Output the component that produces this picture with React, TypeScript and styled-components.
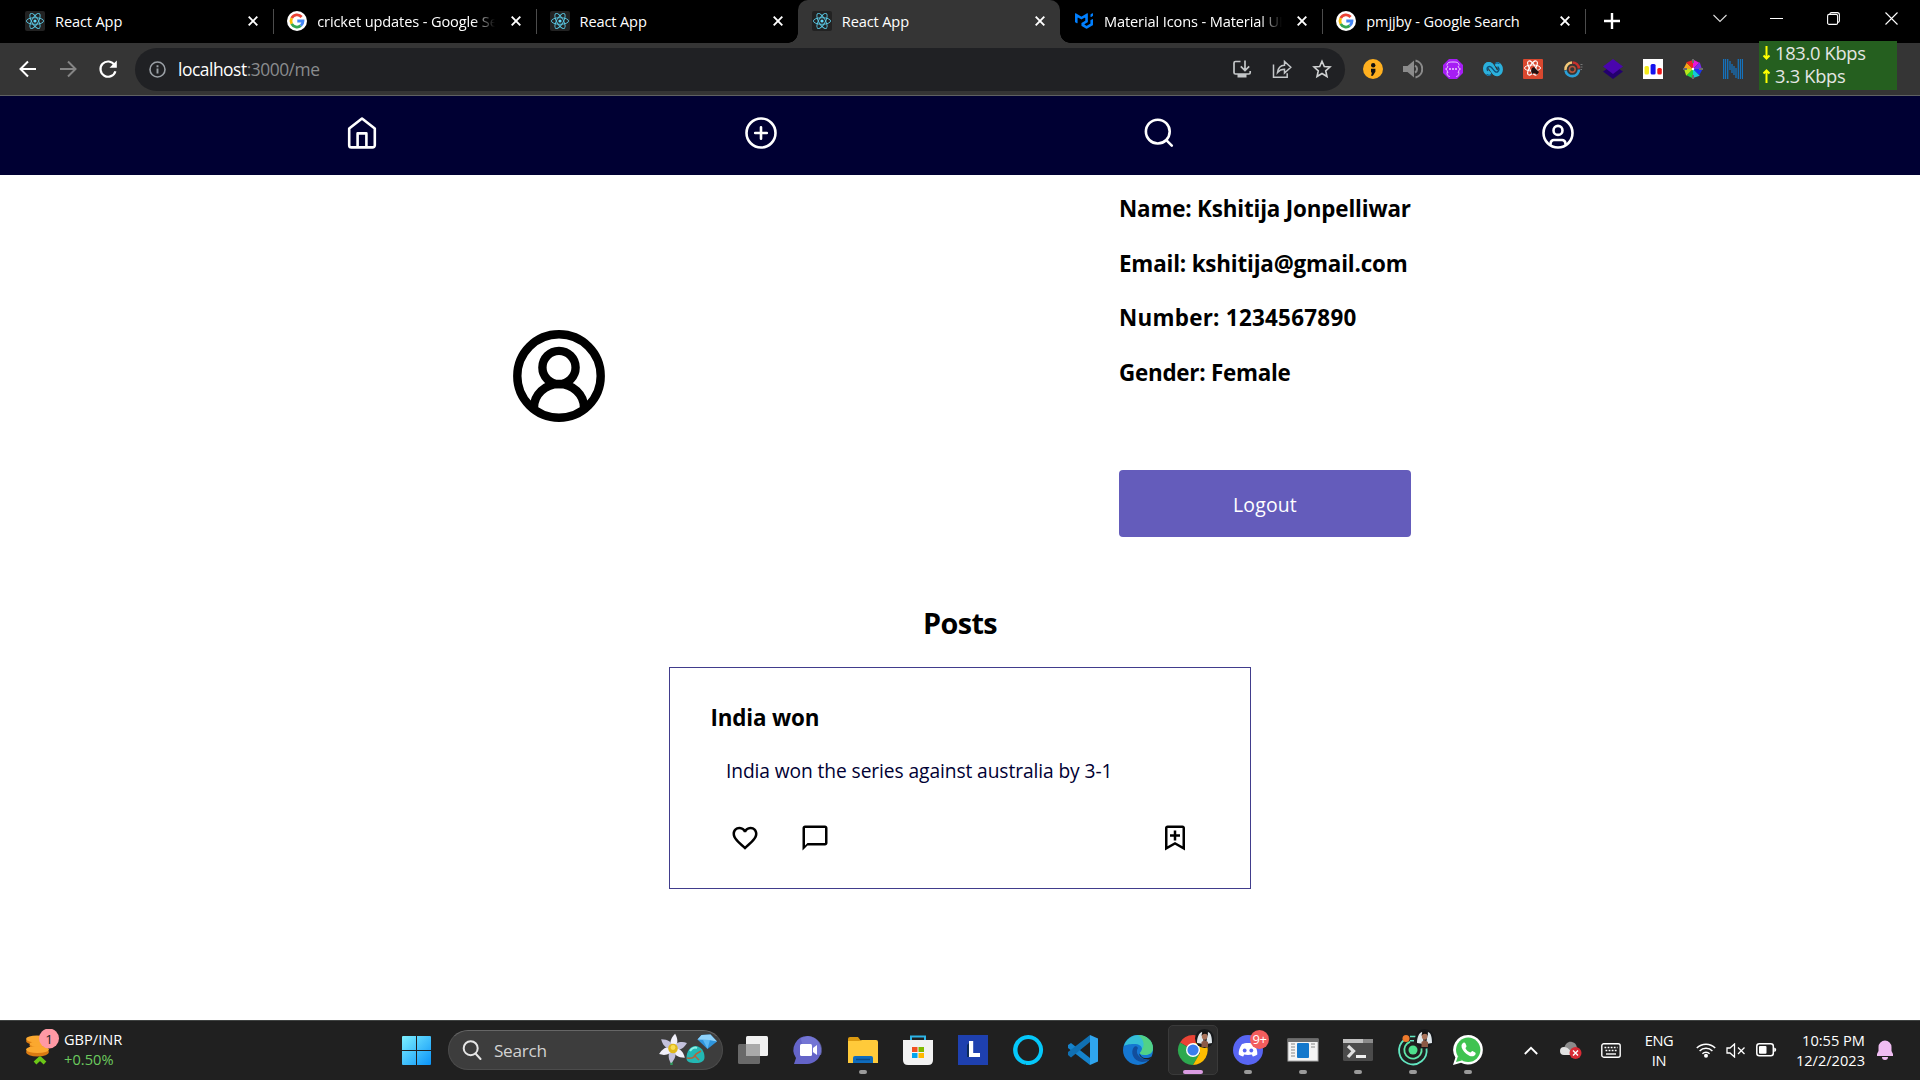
import React from "react";
import styled, { createGlobalStyle } from "styled-components";
import { MdFavoriteBorder, MdChatBubbleOutline } from "react-icons/md";
import { BiBookmarkPlus } from "react-icons/bi";
import { SiMui } from "react-icons/si";

const GlobalStyle = createGlobalStyle`
  * { box-sizing: border-box; }
  body { margin: 0; background: #fff; overflow: hidden; }
  svg { display: block; flex: none; }
`;

const Screen = styled.div`
  width: 1920px;
  height: 1080px;
  display: flex;
  flex-direction: column;
  overflow: hidden;
  font-family: "Open Sans", "Noto Sans", sans-serif;
`;

/* ---------- browser chrome ---------- */

const TabStrip = styled.div`
  height: 43px;
  flex: none;
  display: flex;
  background: #000;
  padding-left: 11px;
`;

const Tab = styled.div<{ $active?: boolean; $noLine?: boolean }>`
  position: relative;
  width: 262.25px;
  height: 43px;
  flex: none;
  display: flex;
  align-items: center;
  padding: 0 10px 2px 14px;
  border-radius: 10px 10px 0 0;
  background: ${(p) => (p.$active ? "#353535" : "transparent")};
  &::after {
    content: "";
    position: absolute;
    display: ${(p) => (p.$active || p.$noLine ? "none" : "block")};
    right: -1px;
    top: 9px;
    width: 1px;
    height: 25px;
    background: #4c4c4c;
  }
`;

const TabFoot = styled.i<{ $side: "left" | "right" }>`
  position: absolute;
  bottom: 0;
  ${(p) => p.$side}: -10px;
  width: 10px;
  height: 10px;
  background: radial-gradient(circle at ${(p) => (p.$side === "left" ? "0 0" : "100% 0")}, transparent 9.5px, #353535 10px);
`;

const TabIcon = styled.span`
  width: 20px;
  flex: none;
  display: flex;
  justify-content: center;
`;

const TabTitle = styled.span<{ $fade?: boolean }>`
  width: 178px;
  margin-left: 10px;
  overflow: hidden;
  white-space: nowrap;
  color: #fff;
  font-size: 14.6px;
  line-height: 22px;
  letter-spacing: -0.13px;
  mask-image: ${(p) => (p.$fade ? "linear-gradient(90deg, #000 156px, transparent 178px)" : "none")};
`;

const TabClose = styled.span`
  margin-left: auto;
  width: 20px;
  display: flex;
  justify-content: center;
  padding-top: 1px;
`;

const WindowControls = styled.div`
  flex: 1;
  display: flex;
  align-items: flex-start;
  padding-left: 19px;
`;

const ControlSlot = styled.span<{ $w: number; $top: number }>`
  width: ${(p) => p.$w}px;
  padding-top: ${(p) => p.$top}px;
`;

const Toolbar = styled.div`
  height: 53px;
  flex: none;
  display: flex;
  align-items: center;
  background: #353535;
  border-bottom: 1px solid #5f6162;
`;

const NavButtons = styled.div`
  width: 135px;
  padding-left: 17.5px;
  display: flex;
  gap: 20px;
`;

const AddressBar = styled.div`
  width: 1210px;
  height: 43px;
  border-radius: 22px;
  background: #202124;
  display: flex;
  align-items: center;
  padding: 0 13px 0 14px;
`;

const Url = styled.span`
  margin-left: 12px;
  font-size: 17.4px;
  letter-spacing: -0.47px;
  color: #8a8c8e;
  b { color: #fff; font-weight: 400; }
`;

const AddressActions = styled.div`
  margin-left: auto;
  display: flex;
  gap: 20px;
`;

const Extensions = styled.div`
  display: flex;
  gap: 20px;
  margin-left: 17.5px;
  padding-bottom: 1px;
`;

const SpeedMeter = styled.div`
  position: absolute;
  left: 1759px;
  top: 41px;
  width: 138px;
  height: 49px;
  padding-top: 1px;
  background: #255f1f;
  color: #e4e6e4;
`;

const SpeedRow = styled.div`
  display: flex;
  align-items: center;
  height: 22.5px;
  padding-left: 3px;
  gap: 4px;
  font-size: 18.3px;
  line-height: 22px;
  letter-spacing: -0.3px;
`;

/* ---------- page ---------- */

const SiteNav = styled.nav`
  height: 79px;
  flex: none;
  background: #000033;
  display: grid;
  grid-template-columns: repeat(4, 398.7px);
  justify-content: center;
  justify-items: center;
  padding-top: 20px;
`;

const Page = styled.main`
  flex: 1;
  min-height: 0;
  background: #fff;
  display: flex;
  flex-direction: column;
  align-items: center;
`;

const Profile = styled.section`
  height: 402px;
  width: 100%;
  flex: none;
  display: flex;
`;

const AvatarPane = styled.div`
  width: 1118px;
  margin-right: 1px;
  display: flex;
  align-items: center;
  justify-content: center;
`;

const Details = styled.div`
  width: 292px;
  padding-top: 18px;
  display: flex;
  flex-direction: column;
`;

const Detail = styled.h3<{ $ls: number }>`
  margin: 0 0 22.7px;
  height: 32px;
  font-size: 22.4px;
  line-height: 32px;
  font-weight: 700;
  color: #000;
  white-space: nowrap;
  letter-spacing: ${(p) => p.$ls}px;
`;

const Logout = styled.button`
  margin-top: 58px;
  height: 67px;
  flex: none;
  border: 0;
  border-radius: 4px;
  background: #645cbb;
  color: #fff;
  font: 400 19.4px/27px "Open Sans", sans-serif;
  padding: 3px 0 0;
  letter-spacing: 0.2px;
`;

const PostsTitle = styled.h2`
  margin: 24px 0 22px;
  font-size: 28.8px;
  line-height: 44px;
  font-weight: 700;
  letter-spacing: -0.6px;
`;

const PostCard = styled.article`
  width: 582px;
  height: 222px;
  border: 1px solid #413d8c;
  padding: 34px 40px 0;
`;

const PostTitle = styled.h3`
  margin: 0 0 0 0.5px;
  font-size: 22.4px;
  line-height: 32px;
  font-weight: 700;
  letter-spacing: -0.15px;
`;

const PostText = styled.p`
  margin: 23px 0 0 16px;
  font-size: 19.2px;
  line-height: 28px;
  color: #000033;
  white-space: nowrap;
  letter-spacing: -0.09px;
`;

const PostActions = styled.div`
  display: flex;
  margin: 38px 20px 0 20px;
  gap: 40px;
  svg:last-child { margin-left: auto; }
`;

/* ---------- taskbar ---------- */

const Taskbar = styled.footer`
  height: 60px;
  flex: none;
  background: #202020;
  border-top: 1px solid #3f4241;
  padding-bottom: 1px;
  display: flex;
  align-items: center;
  color: #fff;
`;

const Widgets = styled.div`
  width: 402px;
  padding-left: 24px;
  display: flex;
  align-items: center;
  gap: 4px;
`;

const WidgetLabels = styled.div`
  display: flex;
  flex-direction: column;
  font-size: 14.6px;
  line-height: 20px;
  letter-spacing: 0;
  padding-bottom: 2px;
  em { font-style: normal; color: #6ccb5f; letter-spacing: 0.05px; }
`;

const SearchBox = styled.div`
  width: 275px;
  height: 40px;
  margin-left: 17px;
  border-radius: 20px;
  background: #3d3d3d;
  border: 1px solid #4c4c4c;
  border-top-color: #666;
  display: flex;
  align-items: center;
  padding: 0 4px 0 13px;
  font-size: 17.2px;
  color: #d2d2d2;
  letter-spacing: -0.3px;
  svg:last-child { margin-left: auto; }
  span { margin-left: 12px; }
`;

const Apps = styled.div`
  display: flex;
  margin-left: 5px;
  gap: 5px;
`;

const AppTile = styled.div<{ $active?: boolean }>`
  position: relative;
  width: 50px;
  height: 50px;
  border-radius: 5px;
  border: 1px solid ${(p) => (p.$active ? "#3a3a3a" : "transparent")};
  background: ${(p) => (p.$active ? "#2c2c2c" : "transparent")};
  display: flex;
  align-items: center;
  justify-content: center;
`;

const Running = styled.i<{ $active?: boolean }>`
  position: absolute;
  bottom: 0;
  width: ${(p) => (p.$active ? 20 : 8)}px;
  height: 4px;
  border-radius: 2px;
  background: ${(p) => (p.$active ? "#da9ce2" : "#9a9a9a")};
`;

const CountBadge = styled.b`
  position: absolute;
  right: 3px;
  top: 4px;
  width: 19px;
  height: 19px;
  border-radius: 50%;
  background: #f25d5d;
  font: 400 13px/18px "Open Sans", sans-serif;
  letter-spacing: -0.5px;
  text-align: center;
`;

const Tray = styled.div`
  flex: 1;
  display: flex;
  align-items: center;
  padding-right: 26px;
  font-size: 14.6px;
  line-height: 20.5px;
  letter-spacing: -0.4px;
`;

const TraySlot = styled.div<{ $ml: number }>`
  margin-left: ${(p) => p.$ml}px;
`;

const Language = styled.div`
  width: 40px;
  margin-left: 18px;
  text-align: center;
`;

const Clock = styled.div`
  margin-left: auto;
  margin-right: 11px;
  padding-bottom: 1px;
  text-align: right;
  line-height: 20px;
  letter-spacing: 0;
`;

/* ---------- drawings ---------- */

const ReactMark = () => (
  <svg width="20" height="20" viewBox="0 0 20 20">
    <rect width="20" height="20" rx="2" fill="#222" />
    <g fill="none" stroke="#5ac8e4" strokeWidth="0.9">
      <ellipse cx="10" cy="10" rx="8.6" ry="3.3" />
      <ellipse cx="10" cy="10" rx="8.6" ry="3.3" transform="rotate(60 10 10)" />
      <ellipse cx="10" cy="10" rx="8.6" ry="3.3" transform="rotate(120 10 10)" />
    </g>
    <circle cx="10" cy="10" r="1.6" fill="#61dafb" />
  </svg>
);

const GoogleMark = () => (
  <svg width="20" height="20" viewBox="0 0 20 20">
    <circle cx="10" cy="10" r="10" fill="#fff" />
    <g fill="none" strokeWidth="2.8">
      <path d="M14.6 6A6 6 0 0 0 4.7 7.2" stroke="#ea4335" />
      <path d="M4.7 7.2a6 6 0 0 0 0 5.6" stroke="#fbbc05" />
      <path d="M4.7 12.8A6 6 0 0 0 13.8 14.7" stroke="#34a853" />
      <path d="M13.8 14.7A6 6 0 0 0 16 10H10.3" stroke="#4285f4" />
    </g>
  </svg>
);

const CloseX = () => (
  <svg width="10" height="10" viewBox="0 0 10 10" stroke="#fff" strokeWidth="1.9">
    <path d="M.7.7l8.6 8.6M9.3.7L.7 9.3" />
  </svg>
);

const line = (w: number, color = "#fff") => ({ fill: "none", stroke: color, strokeWidth: w });

const BackArrow = ({ color, flip }: { color: string; flip?: boolean }) => (
  <svg width="20" height="20" viewBox="0 0 20 20" {...line(2, color)}>
    <path d={flip ? "M2 10h15M10 2.5L17.5 10 10 17.5" : "M18 10H3M10 2.5L2.5 10 10 17.5"} />
  </svg>
);

const Reload = () => (
  <svg width="20" height="20" viewBox="0 0 20 20" {...line(2.2)}>
    <path d="M16.5 6A7.6 7.6 0 1 0 17.4 12.2" />
    <path d="M18.8 1.5v7.3h-7.3z" fill="#fff" stroke="none" />
  </svg>
);

const HomeIcon = () => (
  <svg width="34" height="34" viewBox="0 0 34 34" {...line(2.6)} strokeLinejoin="round">
    <path d="M4.200 12.600L17 2.600 29.800 12.600v16.600a2.200 2.200 0 0 1-2.200 2.200H6.400a2.200 2.200 0 0 1-2.200-2.200z" />
    <path d="M12.600 31V17.400h8.800V31" />
  </svg>
);

const PlusCircle = () => (
  <svg width="34" height="34" viewBox="0 0 34 34" {...line(2.6)}>
    <circle cx="17" cy="17" r="14.500" />
    <path d="M17 11.200v11.600M11.200 17h11.600" strokeLinecap="round" />
  </svg>
);

const SearchIcon = () => (
  <svg width="34" height="34" viewBox="0 0 34 34" {...line(2.6)}>
    <circle cx="15.800" cy="15.600" r="11.900" />
    <path d="M24.300 24.200l5.500 5.500" strokeLinecap="round" />
  </svg>
);

const UserCircle = () => (
  <svg width="34" height="34" viewBox="0 0 34 34" {...line(2.6)}>
    <circle cx="17" cy="17" r="14.500" />
    <circle cx="17" cy="14.400" r="4.500" />
    <path d="M9.600 28.800v-1.500a3.300 3.300 0 0 1 3.300-3.300h8.200a3.300 3.300 0 0 1 3.300 3.300v1.500" />
  </svg>
);

const Avatar = () => (
  <svg width="92" height="92" viewBox="0 0 92 92" {...line(8.4, "#000")}>
    <circle cx="46" cy="46" r="41.700" />
    <circle cx="46" cy="37.500" r="16.600" />
    <path d="M21 77.500a25 23.500 0 0 1 50 0" />
  </svg>
);

const PersonBadge = ({ x = 0, y = 0 }: { x?: number; y?: number }) => (
  <g transform={`translate(${x} ${y})`}>
    <circle cx="9.5" cy="9.5" r="9.5" fill="#17191b" />
    <path d="M2 14c0-6 2-10 5-11l2 12zM17 14c0-6-1-10-4-11l-2 12z" fill="#dfe6ea" />
    <path d="M6.5 18v-5l3-2 3.5 2v5z" fill="#8b5a46" />
    <ellipse cx="9.6" cy="7" rx="2.8" ry="3.8" fill="#a8725a" />
    <path d="M6.5 7c0-6 6.5-6 6.5 0-1-3-5-3-6.5 0z" fill="#111" />
  </g>
);

const extensionIcons: React.ReactNode[] = [
  <g key="semi">
    <circle cx="10" cy="10" r="10" fill="#ffb01f" />
    <circle cx="10.2" cy="6.2" r="2.2" fill="#111" />
    <path d="M8 9.800h4.400v3L9.900 16.700H8l1-3.200H8z" fill="#111" />
  </g>,
  <g key="sound">
    <path d="M0 7h4.5L11 1.500v17L4.500 13H0z" fill="#8b8b8b" />
    <path d="M12 6.500a4 4 0 0 1 0 7M12.500 1.600a8.600 8.600 0 0 1 0 16.800" {...line(2, "#8b8b8b")} />
  </g>,
  <g key="purple">
    <path d="M6 0h8l6 6v8l-6 6H6l-6-6V6z" fill="#a61df5" />
    <path d="M4 6.500C4 3 7 3 10 3s6 0 6 3.500M4 13.500c0 3.500 2 4 3 4M16 13.500c0 3.500-2 4-3 4M5 7c-1 1-.5 3-2.500 3 2 0 1.500 3 2.500 4M15 7c1 1 .5 3 2.500 3-2 0-1.500 3-2.500 4" {...line(1, "#efcfff")} />
    <path d="M6.200 10h1.600M9.200 10h1.600M12.200 10h1.600" {...line(1.600)} />
  </g>,
  <g key="loop" strokeLinecap="round">
    <path d="M5.500 14.500C1 12 2 5.500 6 5.500c4.500 0 4 9 8 9 4.500 0 4.500-7 .5-9" {...line(5, "#2bb0dc")} />
    <path d="M5.500 6.200C9 5 10 14.500 14 14.200" {...line(6, "#2bb0dc")} />
    <path d="M4.500 11.500C3 8 6.500 6 9 9s4 5.500 6 3.500c1.500-1.500.8-3.500 0-4.500" {...line(1.300, "#0d4d78")} />
    <path d="M12 5c1-1.200 2.500-1.500 4-.500M8 15.500c-1 1-2.500 1-4 0" {...line(1.100, "#0d5f90")} />
  </g>,
  <g key="bug">
    <rect width="20" height="20" rx="1" fill="#d9482f" />
    <g {...line(1, "#fff")}>
      <ellipse cx="9.500" cy="9" rx="8" ry="3" />
      <ellipse cx="9.500" cy="9" rx="8" ry="3" transform="rotate(60 9.500 9)" />
      <ellipse cx="9.500" cy="9" rx="8" ry="3" transform="rotate(120 9.500 9)" />
    </g>
    <path d="M9 9l2-1 2 2 3 3-2 3-2-2-3 1-1-3z" fill="#201010" />
  </g>,
  <g key="ring" fill="none" strokeWidth="2.600">
    <path d="M2.500 11A6.800 6.800 0 0 1 9 3.500" stroke="#f2c878" />
    <path d="M9.500 3.500a6.800 6.800 0 0 1 6.500 6" stroke="#c8302c" />
    <path d="M16 10.500A6.800 6.800 0 0 1 2.500 11.500" stroke="#2aa0d8" />
    <circle cx="9.300" cy="10.300" r="2.900" stroke="#b8583c" strokeWidth="1.500" />
    <path d="M17.500 5.500h2M17.500 8h2M17.500 10.500h1.500" stroke="#777" strokeWidth="1" />
  </g>,
  <g key="layers">
    <path d="M0 12.500L10 6l10 6.500L10 20z" fill="#23006e" />
    <path d="M0 7.500L10 0l10 7.500L10 15z" fill="#4a05ae" />
  </g>,
  <g key="bars">
    <rect width="20" height="20" fill="#fff" />
    <rect x="1.500" y="7" width="4.500" height="8.500" rx="1.500" fill="#f4ea1b" />
    <rect x="7.600" y="5" width="5" height="10.500" rx="1.500" fill="#1512ee" />
    <rect x="14.300" y="9" width="4.500" height="6.500" rx="1.500" fill="#f01616" />
  </g>,
  <g key="wheel">
    {["#e815d8", "#7a2be8", "#1a35f0", "#12c8d8", "#1fd63a", "#b7e81a", "#f6a416", "#ee2222"].map((c, i) => (
      <path key={c} d="M10 10V.4L16.300 3.700z" fill={c} transform={`rotate(${i * 45} 10 10)`} />
    ))}
    <path d="M10 0v4M10 16v4M0 10h4M16 10h4" {...line(2, "#222")} />
    <path d="M10 0v4M10 16v4M0 10h4M16 10h4" {...line(0.800, "#ddd")} />
    <circle cx="10" cy="10" r="1.200" fill="#fff" />
  </g>,
  <g key="stripes">
    <path d="M.5 0v20M2.500 0v20M4.700 0v20M7 2v9M9 5v9M11 7v9M13 9v10M15.300 0v20M17.500 0v20M19.600 0v20" {...line(1.3, "#1572bd")} />
  </g>,
];

const Coins = () => (
  <svg width="36" height="42" viewBox="0 0 36 42">
    <g fill="#d97a12">
      <ellipse cx="13.500" cy="23" rx="11.500" ry="4.500" />
      <ellipse cx="15" cy="16.500" rx="9.500" ry="4.500" />
      <ellipse cx="13" cy="12" rx="11" ry="4" />
    </g>
    <g fill="#fba82f">
      <ellipse cx="13.500" cy="20.500" rx="11.500" ry="3.600" />
      <ellipse cx="15" cy="15" rx="9.500" ry="3" />
      <ellipse cx="13" cy="10" rx="11" ry="3.400" />
    </g>
    <path d="M11 34l5-4.600 5 4.600" fill="none" stroke="#6cc817" strokeWidth="4" strokeLinejoin="round" />
    <circle cx="25" cy="9.500" r="10" fill="#ff99a4" />
    <text x="25" y="14.500" textAnchor="middle" fontSize="13.500" fill="#222" fontFamily="Open Sans, sans-serif">1</text>
  </svg>
);

const WindowsLogo = () => (
  <svg width="29" height="29" viewBox="0 0 29 29">
    <defs>
      <linearGradient id="win" x1="0" y1="0" x2="1" y2="1">
        <stop offset="0" stopColor="#7df0ff" />
        <stop offset="1" stopColor="#0a93f8" />
      </linearGradient>
    </defs>
    <path d="M0 1q0-1 1-1h13v14H0zM15 0h13q1 0 1 1v13H15zM0 15h14v14H1q-1 0-1-1zM15 15h14v13q0 1-1 1H15z" fill="url(#win)" />
  </svg>
);

const SearchArt = () => (
  <svg width="60" height="34" viewBox="0 0 60 34">
    <path d="M13.500 18v14" stroke="#2f9a5c" strokeWidth="2.500" />
    {[0, 60, 120, 180, 240, 300].map((a) => (
      <path key={a} d="M15 15.500c-5-4-4-10 0-15 4 5 5 11 0 15z" fill={a % 120 ? "#c3c1dc" : "#f1f0fa"} transform={`rotate(${a + 8} 15 15.500)`} />
    ))}
    <circle cx="15" cy="15.500" r="4.800" fill="#e0b91c" />
    <circle cx="15" cy="14.500" r="2.400" fill="#f8de55" />
    <path d="M28.500 25c0-7 4-12 9-12s9 5 9 11c0 4-3 6-9 6s-9-1-9-5z" fill="#23b8b4" />
    <path d="M29 25c5 1 8-1 9-4l5-3M36 22l5 5" stroke="#b4643c" strokeWidth="1.500" fill="none" />
    <path d="M32 18c2-3 5-4 7-3" stroke="#8af0e6" strokeWidth="2" fill="none" />
    <path d="M39.500 6.500l4-4.500 9-.5 6.500 7L49.500 16z" fill="#2f95dd" />
    <path d="M39.500 6.500l4-4.500 9-.5 6.500 7-8-1.500z" fill="#8fd2fa" />
    <path d="M45 7l4.500 9L52 7z" fill="#5bb8f2" />
  </svg>
);

type AppDef = { id: string; art: React.ReactNode; running?: boolean; active?: boolean; badge?: string };

const apps: AppDef[] = [
  {
    id: "taskview",
    art: (
      <g>
        <rect x="8" y="1" width="22" height="20" rx="1.500" fill="#f1f1f1" />
        <rect x="0" y="9" width="22" height="20" rx="1.500" fill="#777" fillOpacity="0.85" />
        <path d="M8 9h14v12H8z" fill="#aaa" />
      </g>
    ),
  },
  {
    id: "chat",
    art: (
      <g>
        <path d="M15 1a14 14 0 1 1-2 28H1l2-6A14 14 0 0 1 15 1z" fill="#6464c8" />
        <path d="M15 1a14 14 0 0 1 13 19C18 20 8 12 8 3z" fill="#7d80dc" fillOpacity=".6" />
        <rect x="7" y="9" width="12" height="12" rx="1.500" fill="#fff" />
        <path d="M20 13l4-3v10l-4-3z" fill="#fff" />
      </g>
    ),
  },
  {
    id: "explorer",
    running: true,
    art: (
      <g>
        <path d="M0 4q0-2 2-2h8l3 4h-13z" fill="#dc9a10" />
        <path d="M0 6h11l3-1h14q2 0 2 2v21H0z" fill="#ffca3a" />
        <path d="M5 28v-5q0-2 2-2h16q2 0 2 2v5z" fill="#0f6cbd" />
        <path d="M8 24.500h14" stroke="#0a4a88" strokeWidth="1.500" />
      </g>
    ),
  },
  {
    id: "store",
    art: (
      <g>
        <path d="M8 6V1.500h14V6" {...line(2, "#2cb4e6")} />
        <path d="M0 5h30v20q0 5-5 5H5q-5 0-5-5z" fill="#f2f2f2" />
        <path d="M9 12h5.500v5H9z" fill="#f05022" />
        <path d="M15.500 12H21v5h-5.500z" fill="#7fba00" />
        <path d="M9 18h5.500v5H9z" fill="#00a4ef" />
        <path d="M15.500 18H21v5h-5.500z" fill="#ffb900" />
      </g>
    ),
  },
  {
    id: "l",
    art: (
      <g>
        <rect width="30" height="30" fill="#1e40af" />
        <path d="M9 22V10l3-3v15z" fill="#0c2a5a" />
        <path d="M11 6h4.200v12H22v4H11z" fill="#fff" />
      </g>
    ),
  },
  {
    id: "alexa",
    art: (
      <g>
        <path d="M12.500 29.800A15 15 0 1 1 17 29.900c-2 0-3-1.500-3.600-3.900z" fill="#05c8fa" />
        <ellipse cx="15.300" cy="15" rx="10.800" ry="11" fill="#202020" />
        <path d="M12 26l1 4 4 0-2.500-4z" fill="#05c8fa" />
      </g>
    ),
  },
  {
    id: "vscode",
    art: (
      <g>
        <path d="M0 10l3-2 19 15v7L0 13z" fill="#1583cc" />
        <path d="M0 20l3 2.500L22 7V0L0 17z" fill="#1070b3" />
        <path d="M22 0l8 3.500v23L22 30z" fill="#2fa5ee" />
      </g>
    ),
  },
  {
    id: "edge",
    art: (
      <g>
        <circle cx="15" cy="15" r="15" fill="#1577d2" />
        <path d="M1 11C3 4 9 0 15 0c9 0 15 6 15 13 0 5-4 7-8 7-3 0-5-1-5-2 0-1 2-2 2-4 0-3-3-5-8-5S2 10 1 11z" fill="#35bfd6" />
        <path d="M15 0c9 0 15 6 15 13 0 5-4 7-8 7-3 0-5-1-5-2 0-1 2-2 2-4 3-3 2-10-4-14z" fill="#5bd86c" fillOpacity=".75" />
        <path d="M11 12c-4 5-1 14 8 15 4 0 6-1 8-3-4 1-9 0-11-3-2-2-3-5-1-8-1-2-3-2-4-1z" fill="#124e9c" />
        <path d="M28.500 21.500c-3 2-8 2-10 0l-2.500-3c1 5 6 6 11 6z" fill="#202020" />
      </g>
    ),
  },
  {
    id: "chrome",
    running: true,
    active: true,
    art: (
      <g>
        <path d="M15 15L2 7.500A15 15 0 0 1 28 7.500z" fill="#ea4335" />
        <path d="M15 15L2 7.500A15 15 0 0 0 15 30l6.500-11z" fill="#2da94f" />
        <path d="M15 8h13a15 15 0 0 1-13 22l7-12z" fill="#fdbd00" />
        <circle cx="15" cy="15" r="7" fill="#fff" />
        <circle cx="15" cy="15" r="5.600" fill="#3b7ded" />
        <PersonBadge x={17} y={-6} />
      </g>
    ),
  },
  {
    id: "discord",
    running: true,
    badge: "9+",
    art: (
      <g>
        <circle cx="15" cy="15" r="15" fill="#5865f2" />
        <path d="M9 9c3-1.500 9-1.500 12 0 2.500 3.500 3.500 7 3.300 10.500-1.500 1.200-3 1.800-4.500 2l-1-2c-2 .6-5.600.6-7.600 0l-1 2c-1.500-.2-3-.8-4.500-2C5.500 16 6.500 12.500 9 9z" fill="#fff" />
        <circle cx="11.700" cy="15.500" r="1.900" fill="#5865f2" />
        <circle cx="18.300" cy="15.500" r="1.900" fill="#5865f2" />
      </g>
    ),
  },
  {
    id: "app",
    running: true,
    art: (
      <g>
        <rect x="0" y="4" width="30" height="22" fill="#f4f4f4" stroke="#aaa" strokeWidth="1" />
        <path d="M0 4h30v3H0z" fill="#6f6f6f" />
        <rect x="9" y="8" width="12" height="15" rx="1" fill="#1478cc" />
        <path d="M3 9h4M3 12h4M3 15h4M3 18h4M3 21h4M23 9h4M23 12h4" stroke="#888" strokeWidth="1" />
      </g>
    ),
  },
  {
    id: "terminal",
    running: true,
    art: (
      <g>
        <rect x="0" y="4" width="30" height="22" rx="1.500" fill="#4b4b4b" />
        <path d="M0 4h20v4H0z" fill="#c2c2c2" />
        <path d="M20 4h10v4H20z" fill="#8a8a8a" />
        <path d="M5 11l5.500 5L5 22" fill="none" stroke="#dedede" strokeWidth="3.200" />
        <path d="M13 21.500h10" stroke="#f0f0f0" strokeWidth="3" />
      </g>
    ),
  },
  {
    id: "radar",
    running: true,
    art: (
      <g>
        <circle cx="15" cy="15" r="4.500" fill="#4ee08c" />
        <path d="M12 6.800a8.700 8.700 0 1 0 11.500 6.500" {...line(1.800, "#5fe6a8")} />
        <path d="M6 5a13.800 13.800 0 1 0 22.500 8.500" {...line(1.800, "#62e6c0")} />
        <path d="M12 1.500h6M12 5.800h4" {...line(1.600, "#62e6c0")} />
        <circle cx="8" cy="3.500" r="3.500" fill="#ef7a2c" />
        <PersonBadge x={17} y={-6} />
      </g>
    ),
  },
  {
    id: "whatsapp",
    running: true,
    art: (
      <g>
        <path d="M15 0a14.800 14.800 0 1 1-7 27.800L0 30l2.400-7.500A14.800 14.800 0 0 1 15 0z" fill="#fff" />
        <circle cx="15.200" cy="14.800" r="12.200" fill="#3fc351" />
        <path d="M3 27l2-6 4 4.500z" fill="#3fc351" />
        <path d="M9.500 8.500c1-1.500 2.500-1.200 3 0l1 2.500c.2.800-1 1.800-1 2.300 1 2 2.800 3.600 4.800 4.300.6 0 1.500-1.600 2.200-1.500l2.700 1.300c1 .6.300 2.600-1 3.400-2 1.200-5 .4-8-2-3-2.500-5-6-4.700-8.300 0-.8.500-1.500 1-2z" fill="#fff" />
      </g>
    ),
  },
];

const tabs = [
  { icon: <ReactMark />, title: "React App" },
  { icon: <GoogleMark />, title: "cricket updates - Google Search", fade: true },
  { icon: <ReactMark />, title: "React App", noLine: true },
  { icon: <ReactMark />, title: "React App", active: true },
  { icon: <SiMui size={18} color="#007fff" />, title: "Material Icons - Material UI", fade: true },
  { icon: <GoogleMark />, title: "pmjjby - Google Search" },
];

const details: [string, number][] = [
  ["Name: Kshitija Jonpelliwar", -0.17],
  ["Email: kshitija@gmail.com", -0.18],
  ["Number: 1234567890", 0.27],
  ["Gender: Female", -0.25],
];

const SpeedArrow = ({ up }: { up?: boolean }) => (
  <svg width="9" height="14" viewBox="0 0 9 14" {...line(2, "#ffff00")}>
    <path d={up ? "M4.500 14V2M1.500 4.500l3-3 3 3" : "M4.500 0v12M1.500 9.500l3 3 3-3"} />
  </svg>
);

export default function App() {
  return (
    <Screen>
      <GlobalStyle />
      <TabStrip>
        {tabs.map((t, i) => (
          <Tab key={i} $active={t.active} $noLine={t.noLine}>
            {t.active && <TabFoot $side="left" />}
            {t.active && <TabFoot $side="right" />}
            <TabIcon>{t.icon}</TabIcon>
            <TabTitle $fade={t.fade}>{t.title}</TabTitle>
            <TabClose><CloseX /></TabClose>
          </Tab>
        ))}
        <WindowControls>
          <ControlSlot $w={109} $top={13}>
            <svg width="16" height="16" viewBox="0 0 16 16" {...line(2.4)}><path d="M8 0v16M0 8h16" /></svg>
          </ControlSlot>
          <ControlSlot $w={57} $top={14}>
            <svg width="14" height="9" viewBox="0 0 14 9" {...line(1.1, "#ddd")}><path d="M.5 1l6.500 6.500L13.500 1" /></svg>
          </ControlSlot>
          <ControlSlot $w={57} $top={18}>
            <svg width="13" height="2" viewBox="0 0 13 2"><path d="M0 .5h13" stroke="#fff" /></svg>
          </ControlSlot>
          <ControlSlot $w={58} $top={12}>
            <svg width="13" height="13" viewBox="0 0 13 13" {...line(1.1)}>
              <rect x=".6" y="2.400" width="10" height="10" rx="1.500" />
              <path d="M2.800 2.200Q3 .6 4.500.6h5.800q2.100 0 2.100 2.100v6Q12.400 10 10.800 10.400" />
            </svg>
          </ControlSlot>
          <ControlSlot $w={14} $top={12}>
            <svg width="13" height="13" viewBox="0 0 13 13" {...line(1.1)}><path d="M.5.5l12 12M12.500.5l-12 12" /></svg>
          </ControlSlot>
        </WindowControls>
      </TabStrip>

      <Toolbar>
        <NavButtons>
          <BackArrow color="#fff" />
          <BackArrow color="#858585" flip />
          <Reload />
        </NavButtons>
        <AddressBar>
          <svg width="17" height="17" viewBox="0 0 17 17" {...line(1.6, "#9aa0a6")}>
            <circle cx="8.500" cy="8.500" r="7.500" /><path d="M8.500 7.500v5M8.500 4.300v1.900" strokeWidth="1.900" />
          </svg>
          <Url><b>localhost</b>:3000/me</Url>
          <AddressActions>
            <svg width="20" height="20" viewBox="0 0 20 20" {...line(1.7, "#c4c7c9")}>
              <path d="M8.500 2.500h-5a1.500 1.500 0 0 0-1.500 1.500v9.500a1.500 1.500 0 0 0 1.500 1.500h13.500q1.200 0 1.200-1.500v-1.500M13 1.500v9.500M8.800 7.300l4.200 4.200 4.200-4.200" />
              <path d="M5.500 15h9v3.500h-9z" fill="#c4c7c9" stroke="none" />
            </svg>
            <svg width="20" height="20" viewBox="0 0 20 20" {...line(1.5, "#c4c7c9")}>
              <path d="M1.500 5.500v12.700h13.700v-4M5.500 13.500c.5-4.500 3-7 7-7.200V2.500l6.300 5.800-6.300 5.700v-3.700c-3 0-5 .8-7 3.200z" />
            </svg>
            <svg width="20" height="20" viewBox="0 0 20 20" {...line(1.6, "#d0d2d3")}>
              <path d="M10 2.200l2.300 5.300 5.700.5-4.300 3.800 1.300 5.700-5-3-5 3 1.300-5.700L2 8l5.700-.5z" />
            </svg>
          </AddressActions>
        </AddressBar>
        <Extensions>
          {extensionIcons.map((icon, i) => (
            <svg key={i} width="20" height="20" viewBox="0 0 20 20">{icon}</svg>
          ))}
        </Extensions>
      </Toolbar>
      <SpeedMeter>
        <SpeedRow><SpeedArrow />183.0 Kbps</SpeedRow>
        <SpeedRow><SpeedArrow up />3.3 Kbps</SpeedRow>
      </SpeedMeter>

      <SiteNav>
        <HomeIcon />
        <PlusCircle />
        <SearchIcon />
        <UserCircle />
      </SiteNav>

      <Page>
        <Profile>
          <AvatarPane><Avatar /></AvatarPane>
          <Details>
            {details.map(([text, ls]) => <Detail key={text} $ls={ls}>{text}</Detail>)}
            <Logout>Logout</Logout>
          </Details>
        </Profile>
        <PostsTitle>Posts</PostsTitle>
        <PostCard>
          <PostTitle>India won</PostTitle>
          <PostText>India won the series against australia by 3-1</PostText>
          <PostActions>
            <MdFavoriteBorder size={30} />
            <MdChatBubbleOutline size={30} />
            <BiBookmarkPlus size={30} />
          </PostActions>
        </PostCard>
      </Page>

      <Taskbar>
        <Widgets>
          <Coins />
          <WidgetLabels><span>GBP/INR</span><em>+0.50%</em></WidgetLabels>
        </Widgets>
        <WindowsLogo />
        <SearchBox>
          <svg width="20" height="20" viewBox="0 0 20 20" {...line(2, "#e6e6e6")}>
            <circle cx="8.700" cy="8.200" r="7" /><path d="M13.500 13.500l5 5.500" strokeLinecap="round" />
          </svg>
          <span>Search</span>
          <SearchArt />
        </SearchBox>
        <Apps>
          {apps.map((a) => (
            <AppTile key={a.id} $active={a.active}>
              <svg width="30" height="30" viewBox="0 0 30 30" overflow="visible">{a.art}</svg>
              {a.badge && <CountBadge>{a.badge}</CountBadge>}
              {a.running && <Running $active={a.active} />}
            </AppTile>
          ))}
        </Apps>
        <Tray>
          <TraySlot $ml={31}>
            <svg width="14" height="9" viewBox="0 0 14 9" {...line(1.8)}><path d="M.8 8L7 1.800 13.200 8" /></svg>
          </TraySlot>
          <TraySlot $ml={22}>
            <svg width="22" height="18" viewBox="0 0 22 18">
              <path d="M4 8C5 2 9 0 12 1c4 1 5 4 5 7l-6 4z" fill="#8b8b8b" />
              <path d="M4 14a4 4 0 0 1 0-8c4 0 5 3 8 5v3z" fill="#e2e2e2" />
              <circle cx="15.500" cy="12" r="6" fill="#d92b35" />
              <path d="M13 9.500l5 5M18 9.500l-5 5" {...line(1.4)} />
            </svg>
          </TraySlot>
          <TraySlot $ml={19}>
            <svg width="20" height="15" viewBox="0 0 20 15" {...line(1.4)}>
              <rect x=".8" y=".8" width="18.400" height="13.400" rx="2" />
              <path d="M3.500 4.500h13M4.500 7.500h12" strokeDasharray="1.800 1.300" /><path d="M5 11h10" />
            </svg>
          </TraySlot>
          <Language>ENG<br />IN</Language>
          <TraySlot $ml={17}>
            <svg width="20" height="16" viewBox="0 0 20 16" {...line(1.5)}>
              <path d="M.8 6a13 13 0 0 1 18.400 0M3.600 9a9 9 0 0 1 12.800 0M6.400 11.800a5 5 0 0 1 7.200 0" />
              <circle cx="10" cy="13.700" r="2" fill="#fff" stroke="none" />
            </svg>
          </TraySlot>
          <TraySlot $ml={10}>
            <svg width="20" height="15" viewBox="0 0 20 15" {...line(1.3)}>
              <path d="M1 5h3l4.500-4v13L4 10H1z" /><path d="M12 4.500l6.500 6.500M18.500 4.500L12 11" />
            </svg>
          </TraySlot>
          <TraySlot $ml={10}>
            <svg width="21" height="14" viewBox="0 0 21 14" {...line(1.5)}>
              <rect x=".8" y=".8" width="16.500" height="12" rx="2.500" />
              <rect x="3" y="3" width="7.500" height="7.800" rx="1" fill="#fff" stroke="none" />
              <path d="M18.200 4.500q2 .3 2 2.300t-2 2.300z" fill="#fff" stroke="none" />
            </svg>
          </TraySlot>
          <Clock>10:55 PM<br />12/2/2023</Clock>
          <svg width="18" height="20" viewBox="0 0 18 20">
            <path d="M1 16v-2l1.500-3V7a6.500 6.500 0 0 1 13 0v4l1.500 3v2z" fill="#f0bdf2" />
            <path d="M6 17h6a3 3 0 0 1-6 0z" fill="#f0bdf2" />
          </svg>
        </Tray>
      </Taskbar>
    </Screen>
  );
}
